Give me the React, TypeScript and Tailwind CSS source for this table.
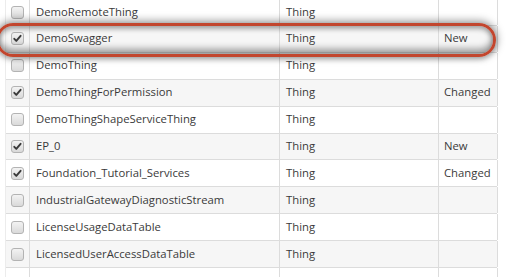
import React from "react";

type Row = { name: string; type: string; status: string; checked: boolean };

const rows: Row[] = [
  { name: "DemoRemoteThing", type: "Thing", status: "", checked: false },
  { name: "DemoSwagger", type: "Thing", status: "New", checked: true },
  { name: "DemoThing", type: "Thing", status: "", checked: false },
  { name: "DemoThingForPermission", type: "Thing", status: "Changed", checked: true },
  { name: "DemoThingShapeServiceThing", type: "Thing", status: "", checked: false },
  { name: "EP_0", type: "Thing", status: "New", checked: true },
  { name: "Foundation_Tutorial_Services", type: "Thing", status: "Changed", checked: true },
  { name: "IndustrialGatewayDiagnosticStream", type: "Thing", status: "", checked: false },
  { name: "LicenseUsageDataTable", type: "Thing", status: "", checked: false },
  { name: "LicensedUserAccessDataTable", type: "Thing", status: "", checked: false },
  { name: "", type: "", status: "", checked: false },
];

function Checkbox({ checked }: { checked: boolean }) {
  return (
    <svg width="13" height="13" viewBox="0 0 13 13">
      <defs>
        <linearGradient id="cbg" x1="0" y1="0" x2="0" y2="1">
          <stop offset="0" stopColor="#f4f4f4" />
          <stop offset="1" stopColor="#d8d8d8" />
        </linearGradient>
      </defs>
      <rect x="0.5" y="0.5" width="12" height="12" rx="2.5" fill="url(#cbg)" stroke="#b3b3b3" />
      {checked && (
        <path d="M3.3 6.8 L5.3 8.9 L9.6 3.8" fill="none" stroke="#3a3a3a" strokeWidth="1.9" strokeLinecap="round" strokeLinejoin="round" />
      )}
    </svg>
  );
}

export default function App() {
  return (
    <div
      className="relative w-[507px] h-[277px] overflow-hidden bg-white text-[11.3px] text-[#3a3a3a]"
      style={{ fontFamily: '"Open Sans", "Noto Sans", sans-serif' }}
    >
      <div className="ml-[5px] w-[492px] border-l border-[#ececec]">
        {rows.map((r, i) => (
          <div
            key={i}
            className={`grid grid-cols-[24px_250px_159px_59px] border-b border-[#dcdcdc] ${
              i === 0 ? "h-[26px]" : "h-[26.9px]"
            } ${i % 2 === 1 ? "bg-[#f6f6f6]" : "bg-white"}`}
          >
            <div className="flex items-center justify-center border-r border-[#dcdcdc]">
              {r.name && <Checkbox checked={r.checked} />}
            </div>
            <div className="flex items-center pl-[6px] border-r border-[#dcdcdc]">{r.name}</div>
            <div className="flex items-center pl-[6px] border-r border-[#dcdcdc]">{r.type}</div>
            <div className="flex items-center pl-[5px] border-r border-[#dcdcdc]">{r.status}</div>
          </div>
        ))}
      </div>
      <div className="absolute left-[-4px] top-[23px] w-[500px] h-[34px] rounded-full border-[3px] border-[#c2462e] shadow-[0_-1px_9px_1px_rgba(0,0,0,0.4),0_2px_5px_rgba(0,0,0,0.2),inset_0_-5px_7px_rgba(0,0,0,0.38),inset_0_3px_5px_rgba(0,0,0,0.32)]" />
    </div>
  );
}
